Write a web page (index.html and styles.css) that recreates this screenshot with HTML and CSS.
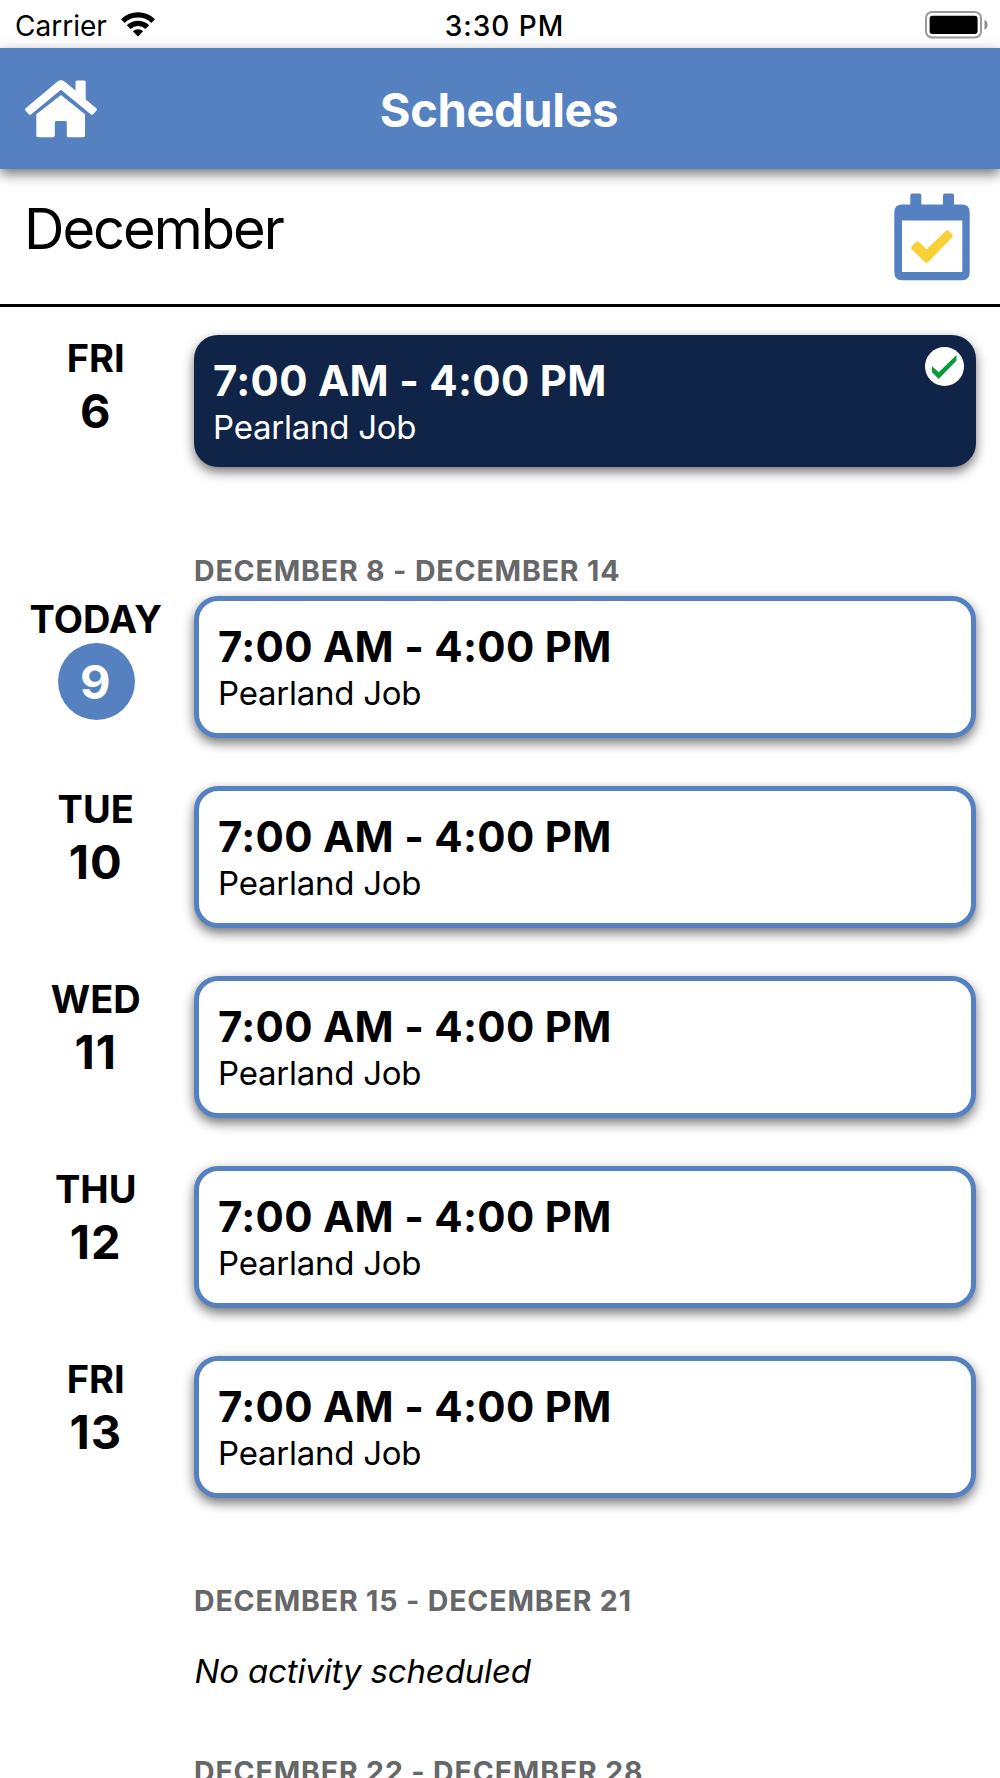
FILE: index.html
```html
<!DOCTYPE html>
<html lang="en">
    <head>
        <meta charset="UTF-8" />
        <meta name="viewport" content="width=device-width, initial-scale=1.0" />
        <title>Schedules</title>
        <link rel="stylesheet" href="styles.css">
    </head>
    <body>
        <div class="status-bar">
            <div class="carrier">
                <span>Carrier</span>
                <svg class="wifi" viewBox="0 0 34 25" width="34" height="25">
                    <path d="M0 7.2A24.5 24.5 0 0 1 34 7.2L30.4 10.9A19.2 19.2 0 0 0 3.6 10.9Z" />
                    <path d="M5.8 13.2A16 16 0 0 1 28.2 13.2L24.4 16.9A10.6 10.6 0 0 0 9.6 16.9Z" />
                    <path d="M11.8 19.2A7.6 7.6 0 0 1 22.2 19.2L17 24.5Z" />
                </svg>
            </div>
            <div class="time">3:30 PM</div>
            <svg class="battery" viewBox="0 0 63 28" width="63" height="28">
                <rect x="1" y="1" width="55" height="25.5" rx="6" fill="#fff" stroke="#999" stroke-width="2" />
                <rect x="4.6" y="4.7" width="48" height="18.2" rx="3" />
                <path d="M59.5 8.7C63.6 10.5 63.6 17 59.5 18.8Z" fill="#8c8c8c" />
            </svg>
        </div>
        <header class="header">
            <svg class="home" viewBox="0 0 74 58" width="74" height="58">
                <path d="M33.5 1.5Q37 -1.2 40.5 1.5L51.5 10.5V2Q51.5 .5 53 .5H60.2Q61.7 .5 61.7 2V19.5L72.3 28.3Q73.5 29.4 72.5 30.6L69.2 34.3Q68 35.3 66.7 34.3L37 9.7L7.3 34.3Q6 35.3 4.8 34.3L1.5 30.6Q.5 29.4 1.7 28.3Z" />
                <path d="M37 15L61 34.3V55.5Q61 57.3 59.2 57.3H44.5Q42.8 57.3 42.8 55.5V42.5Q42.8 41 41.3 41H32.3Q30.8 41 30.8 42.5V55.5Q30.8 57.3 29 57.3H14Q12.3 57.3 12.3 55.5V34.3Z" />
            </svg>
            <h1 class="title">Schedules</h1>
        </header>
        <div class="month">
            <h2 class="month-name">December</h2>
            <svg class="calendar" viewBox="0 0 76 88" width="76" height="88">
                <path fill="#5581c1" d="M8 11.5H16.3V2.5Q16.3 .5 18.3 .5H25.3Q27.3 .5 27.3 2.5V11.5H49V2.5Q49 .5 51 .5H58Q60 .5 60 2.5V11.5H68Q75.7 11.5 75.7 19.5V79Q75.7 87.2 68 87.2H8Q.3 87.2 .3 79V19.5Q.3 11.5 8 11.5Z" />
                <rect x="8" y="27.5" width="60.3" height="51.5" fill="#fff" />
                <path fill="#fad039" d="M21.7 49.3Q23.5 47.8 25.3 49.3L32.5 56.3L51.7 38Q53.3 36.7 55 38L58.2 41.3Q59.3 42.8 58.2 44.3L34.5 68.8Q32.5 70.5 30.5 68.8L17.8 56.5Q16.6 55 17.8 53.3Z" />
            </svg>
        </div>
        <main class="schedule">
            <section class="week">
                <div class="row">
                    <div class="date"><span class="day">FRI</span><span class="num">6</span></div>
                    <div class="card done">
                        <div class="hours">7:00 AM - 4:00 PM</div>
                        <div class="job">Pearland Job</div>
                        <svg class="check" viewBox="0 0 39 39" width="39" height="39">
                            <circle cx="19.5" cy="19.5" r="19.5" fill="#fff" />
                            <path d="M7 19.3L13.7 25.3L31.5 8V13.8L13.7 32L7 25.3Z" fill="#089b3e" />
                        </svg>
                    </div>
                </div>
            </section>
            <section class="week">
                <h3 class="range">DECEMBER 8 - DECEMBER 14</h3>
                <div class="row">
                    <div class="date today"><span class="day">TODAY</span><span class="num">9</span></div>
                    <div class="card">
                        <div class="hours">7:00 AM - 4:00 PM</div>
                        <div class="job">Pearland Job</div>
                    </div>
                </div>
                <div class="row">
                    <div class="date"><span class="day">TUE</span><span class="num">10</span></div>
                    <div class="card">
                        <div class="hours">7:00 AM - 4:00 PM</div>
                        <div class="job">Pearland Job</div>
                    </div>
                </div>
                <div class="row">
                    <div class="date"><span class="day">WED</span><span class="num">11</span></div>
                    <div class="card">
                        <div class="hours">7:00 AM - 4:00 PM</div>
                        <div class="job">Pearland Job</div>
                    </div>
                </div>
                <div class="row">
                    <div class="date"><span class="day">THU</span><span class="num">12</span></div>
                    <div class="card">
                        <div class="hours">7:00 AM - 4:00 PM</div>
                        <div class="job">Pearland Job</div>
                    </div>
                </div>
                <div class="row">
                    <div class="date"><span class="day">FRI</span><span class="num">13</span></div>
                    <div class="card">
                        <div class="hours">7:00 AM - 4:00 PM</div>
                        <div class="job">Pearland Job</div>
                    </div>
                </div>
            </section>
            <section class="week">
                <h3 class="range">DECEMBER 15 - DECEMBER 21</h3>
                <p class="empty">No activity scheduled</p>
            </section>
            <section class="week">
                <h3 class="range">DECEMBER 22 - DECEMBER 28</h3>
            </section>
        </main>
    </body>
</html>
```
FILE: styles.css
```css
* {
    margin: 0;
    padding: 0;
    box-sizing: border-box;
}

body {
    height: 100vh;
    overflow: hidden;
    display: flex;
    flex-direction: column;
    background: #fff;
    color: #000;
    font-family: Inter, "Liberation Sans", sans-serif;
}

svg {
    display: block;
    flex: none;
}

.status-bar {
    flex: none;
    display: grid;
    grid-template-columns: 1fr auto 1fr;
    height: 48px;
    padding: 0 12px 0 15px;
    font-size: 28px;
    line-height: 52px;
}

.carrier {
    display: flex;
    gap: 14px;
}

.wifi {
    margin-top: 12px;
}

.time {
    font-weight: 500;
    letter-spacing: 1px;
    padding-left: 6px;
}

.battery {
    justify-self: end;
    margin-top: 11px;
}

.header {
    flex: none;
    display: grid;
    grid-template-columns: 1fr auto 1fr;
    height: 121px;
    padding: 0 26px 0 24px;
    background: #5581c1;
    color: #fff;
    box-shadow: 0 5px 12px rgba(0, 0, 0, 0.55);
}

.home {
    margin-top: 32px;
    fill: #fff;
}

.title {
    font-size: 47px;
    font-weight: 700;
    letter-spacing: -0.35px;
    line-height: 123px;
}

.month {
    flex: none;
    display: flex;
    justify-content: space-between;
    height: 138px;
    padding: 24px 30px 0 24px;
    border-bottom: 3px solid #000;
}

.month-name {
    font-size: 56px;
    font-weight: 400;
    letter-spacing: -2px;
    line-height: 73px;
}

.schedule {
    padding: 28px 24px 0 0;
}

.week {
    display: flex;
    flex-direction: column;
    gap: 48px;
    margin-bottom: 84px;
}

.row {
    display: grid;
    grid-template-columns: 193.5px 1fr;
}

.date {
    display: flex;
    flex-direction: column;
    align-items: center;
    height: 132px;
    padding-right: 2px;

    .day {
        font-size: 38px;
        font-weight: 700;
        line-height: 46px;
    }

    .num {
        font-size: 47px;
        font-weight: 700;
        letter-spacing: 1px;
        line-height: 60px;
    }

    &.today .num {
        width: 77px;
        height: 77px;
        margin: 1px 0 0 2px;
        padding-right: 2px;
        border-radius: 50%;
        background: #5581c1;
        color: #fff;
        text-align: center;
        line-height: 77px;
    }
}

.card {
    position: relative;
    height: 142px;
    padding: 20px 19.5px;
    border: 5px solid #5581c1;
    border-radius: 24px;
    background: #fff;
    box-shadow: 0 5px 12px rgba(0, 0, 0, 0.55);

    &.done {
        height: 132px;
        border: 0;
        background: #0f2447;
        color: #fff;
    }

    .hours {
        font-size: 42px;
        font-weight: 700;
        letter-spacing: 0.27px;
        line-height: 52px;
    }

    .job {
        font-size: 33px;
        letter-spacing: -0.25px;
        line-height: 40px;
    }

    .check {
        position: absolute;
        top: 12px;
        right: 12px;
    }
}

.range {
    height: 36px;
    margin: 0.5px 0 -40px 194px;
    color: #666769;
    font-size: 28.5px;
    font-weight: 700;
    letter-spacing: 0.85px;
    line-height: 38px;
}

.empty {
    margin: 25px 0 -23px 194.5px;
    font-size: 33px;
    font-style: italic;
    letter-spacing: -0.15px;
    line-height: 40px;
}
```
